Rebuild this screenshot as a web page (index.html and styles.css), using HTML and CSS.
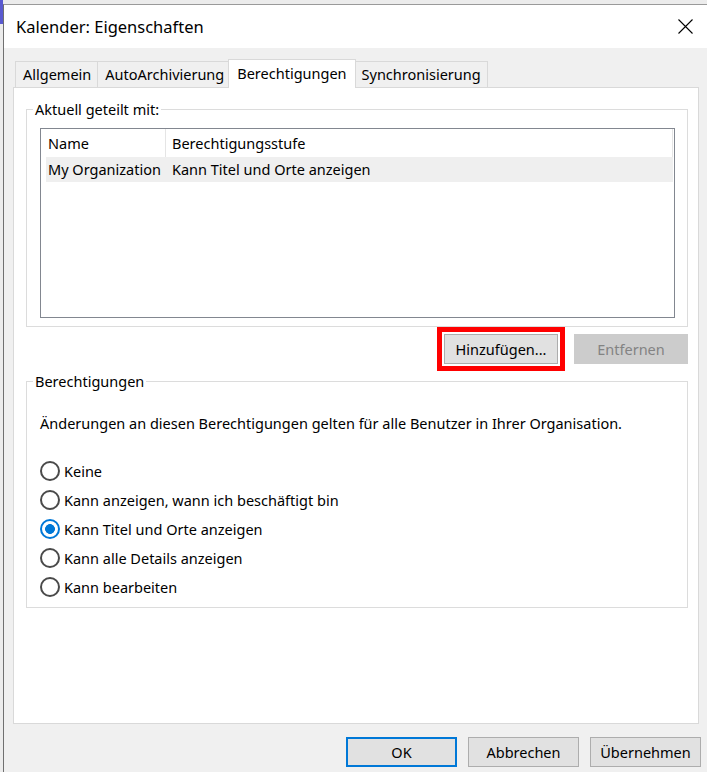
FILE: index.html
```html
<!DOCTYPE html>
<html lang="de">
<head>
<meta charset="UTF-8">
<meta name="viewport" content="width=device-width, initial-scale=1.0">
<title>Kalender: Eigenschaften</title>
<link rel="stylesheet" href="styles.css">
</head>
<body>
  <div class="desktop">
    <div class="dialog">
      <div class="titlebar">
        <span class="title">Kalender: Eigenschaften</span>
        <button class="close" title="Schließen">
          <svg width="15" height="15" viewBox="0 0 15 15"><path d="M0.5 0.5L14.5 14.5M14.5 0.5L0.5 14.5" stroke="#000" stroke-width="1.1" fill="none"/></svg>
        </button>
      </div>
      <div class="body">
        <div class="tabs">
          <div class="tab">Allgemein</div>
          <div class="tab">AutoArchivierung</div>
          <div class="tab active">Berechtigungen</div>
          <div class="tab">Synchronisierung</div>
        </div>
        <div class="panel">
          <fieldset class="group shared">
            <legend>Aktuell geteilt mit:</legend>
            <div class="list">
              <div class="list-head">
                <span>Name</span>
                <span>Berechtigungsstufe</span>
              </div>
              <div class="list-row">
                <span>My Organization</span>
                <span>Kann Titel und Orte anzeigen</span>
              </div>
            </div>
          </fieldset>
          <div class="list-actions">
            <button class="btn marked">Hinzufügen...</button>
            <button class="btn" disabled>Entfernen</button>
          </div>
          <fieldset class="group levels">
            <legend>Berechtigungen</legend>
            <p class="note">Änderungen an diesen Berechtigungen gelten für alle Benutzer in Ihrer Organisation.</p>
            <div class="options">
              <label class="option"><input type="radio" name="level"> Keine</label>
              <label class="option"><input type="radio" name="level"> Kann anzeigen, wann ich beschäftigt bin</label>
              <label class="option"><input type="radio" name="level" checked> Kann Titel und Orte anzeigen</label>
              <label class="option"><input type="radio" name="level"> Kann alle Details anzeigen</label>
              <label class="option"><input type="radio" name="level"> Kann bearbeiten</label>
            </div>
          </fieldset>
        </div>
        <div class="footer">
          <button class="btn default">OK</button>
          <button class="btn">Abbrechen</button>
          <button class="btn">Übernehmen</button>
        </div>
      </div>
    </div>
  </div>
</body>
</html>
```

FILE: styles.css
```css
body {
  margin: 0;
  font-family: 'Noto Sans', 'Open Sans', sans-serif;
  font-size: 14.5px;
  color: #000;
  background-color: #ececec;
}
.desktop {
  height: 772px;
  box-sizing: border-box;
  padding: 4px 0 0 3px;
  background: linear-gradient(#5a5ad0, #5a5ad0) 0 0 / 3px 24px no-repeat, #ececec;
  overflow: hidden;
}
.dialog {
  height: 768px;
  display: flex;
  flex-direction: column;
  border-left: 1px solid #707070;
  border-top: 1px solid #9a9a9a;
  background-color: #f0f0f0;
}
.titlebar {
  height: 43px;
  flex: none;
  display: flex;
  align-items: center;
  justify-content: space-between;
  background-color: #fff;
  padding: 0 14px 0 12px;
}
.title {
  font-size: 16.5px;
  line-height: 22px;
}
.close {
  border: none;
  background: none;
  padding: 0;
  width: 15px;
  height: 15px;
  display: block;
}
.close svg {
  display: block;
}
.body {
  flex: 1;
  display: flex;
  flex-direction: column;
  padding: 11px 8px 0 9px;
}
.tabs {
  display: flex;
  align-items: flex-end;
  margin: 0 0 -1px 2px;
  position: relative;
  z-index: 1;
}
.tab {
  height: 25px;
  line-height: 24px;
  padding: 0 6px 0 7px;
  border: 1px solid #d9d9d9;
  border-bottom: none;
  margin-left: -1px;
  margin-bottom: 1px;
  background-color: #f0f0f0;
}
.tab:first-child {
  margin-left: 0;
}
.tab.active {
  height: 28px;
  line-height: 26px;
  margin: 0 -2px 0 -3px;
  padding: 0 8px;
  background-color: #fff;
  position: relative;
  z-index: 1;
}
.tab.active + .tab {
  margin-left: 0;
}
.panel {
  flex: 1;
  background-color: #fff;
  border: 1px solid #d9d9d9;
  padding: 11px 10px 0 12px;
}
.group {
  margin: 0;
  border: 1px solid #dcdcdc;
  padding: 9px 12px 8px 13px;
}
.group legend {
  padding: 0 2px;
  margin-left: -7px;
  line-height: 20px;
}
.list {
  height: 188px;
  border: 1px solid #828790;
  padding: 0 1px 0 5px;
}
.list-head,
.list-row {
  display: grid;
  grid-template-columns: 120px 1fr;
}
.list-head {
  height: 28px;
  line-height: 28px;
}
.list-head span {
  border-right: 1px solid #e5e5e5;
}
.list-row {
  height: 25px;
  line-height: 25px;
  background-color: #efefef;
}
.list-head span,
.list-row span {
  padding-left: 2px;
  white-space: nowrap;
}
.list-head span + span,
.list-row span + span {
  padding-left: 6px;
}
.list-actions {
  display: flex;
  justify-content: flex-end;
  gap: 16px;
  margin: 7px 0 7px;
}
.btn {
  font-family: inherit;
  font-size: 14.5px;
  color: #000;
  height: 30px;
  width: 111px;
  padding: 0;
  background-color: #e1e1e1;
  border: 1px solid #adadad;
}
.list-actions .btn {
  width: 114px;
}
.btn:disabled {
  background-color: #cccccc;
  border-color: #cccccc;
  color: #838383;
}
.btn.marked {
  outline: 5px solid #ff0000;
  outline-offset: 2px;
}
.btn.default {
  border: 2px solid #0078d7;
}
.levels {
  padding: 22px 12px 6px 13px;
}
.note {
  margin: 0;
  line-height: 20px;
}
.options {
  margin-top: 23px;
}
.option {
  display: flex;
  align-items: center;
  gap: 4px;
  height: 29px;
}
.option input {
  appearance: none;
  -webkit-appearance: none;
  margin: 0;
  width: 20px;
  height: 20px;
  border: 2px solid #4a4a4a;
  border-radius: 50%;
  background-color: #fff;
}
.option input:checked {
  border-color: #0078d7;
  background: radial-gradient(circle, #0078d7 0 4.6px, #fff 5.2px);
}
.footer {
  display: flex;
  justify-content: flex-end;
  gap: 11px;
  padding: 13px 0 6px 0;
  margin-right: -2px;
}
```
